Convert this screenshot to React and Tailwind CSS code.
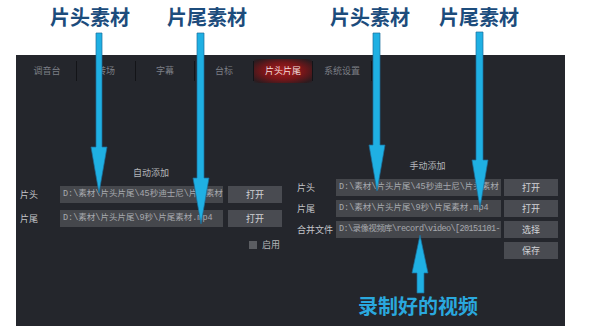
import React from "react";

const cjk = { fontFamily: '"Noto Sans CJK SC", "Noto Sans", sans-serif' };
const mono = { fontFamily: '"Liberation Mono", "Noto Sans CJK SC", monospace' };

const tabs = ["调音台", "转场", "字幕", "台标", "片头片尾", "系统设置"];

function Tab({ label, active }) {
  return (
    <div className="flex items-center">
      <div
        className={
          "w-[58px] h-[24px] flex items-center justify-center text-[9px] " +
          (active
            ? "text-[#f2dede] bg-[radial-gradient(ellipse_at_center,#a81d1d_0%,#761619_50%,#2c1b1f_88%,transparent_100%)]"
            : "text-[#7c7f86]")
        }
      >
        {label}
      </div>
      <div className="w-px h-[20px] bg-[#131418]" />
    </div>
  );
}

function Field({ text, w, extra = "" }) {
  return (
    <div
      className={"h-full shrink-0 bg-[#45474c] text-[#a7a9ae] text-[8.5px] pl-[3px] flex items-center overflow-hidden whitespace-nowrap " + w + " " + extra}
      style={mono}
    >
      <span className="block overflow-hidden">{text}</span>
    </div>
  );
}

function Btn({ label, className = "" }) {
  return (
    <div className={"w-[54px] shrink-0 h-full bg-[#494b51] text-[#d2d3d6] text-[9px] flex items-center justify-center " + className}>
      {label}
    </div>
  );
}

export default function App() {
  return (
    <div className="relative w-[589px] h-[331px] bg-white overflow-hidden" style={cjk}>
      {/* panel */}
      <div className="ml-[16px] pt-[55px]">
        <div className="w-[549px] h-[271px] bg-[#24262c] flex flex-col">
          <div className="h-[31px] flex items-center pl-[2px] pt-[1px]">
            {tabs.map((t) => (
              <Tab key={t} label={t} active={t === "片头片尾"} />
            ))}
          </div>
          <div className="flex items-start">
            {/* left group */}
            <div className="ml-[4px] w-[262px] mt-[81px] flex flex-col">
              <div className="h-[12px] leading-[12px] text-[9px] text-[#b4b6ba] text-center">自动添加</div>
              <div className="mt-[7px] h-[17px] flex items-center">
                <div className="w-[40px] text-[9px] text-[#c3c5c9]">片头</div>
                <Field w="w-[163px]" text="D:\素材\片头片尾\45秒迪士尼\片头素材" />
                <Btn label="打开" className="ml-[5px]" />
              </div>
              <div className="mt-[7px] h-[17px] flex items-center">
                <div className="w-[40px] text-[9px] text-[#c3c5c9]">片尾</div>
                <Field w="w-[163px]" text="D:\素材\片头片尾\9秒\片尾素材.mp4" />
                <Btn label="打开" className="ml-[5px]" />
              </div>
              <div className="mt-[12px] h-[12px] flex items-center justify-end pr-[2px]">
                <div className="w-[8px] h-[8px] bg-[#5b5d62] mr-[5px]" />
                <div className="text-[9px] text-[#b4b6ba]">启用</div>
              </div>
            </div>
            {/* right group */}
            <div className="ml-[15px] w-[261px] mt-[74px] flex flex-col">
              <div className="h-[12px] leading-[12px] text-[9px] text-[#b4b6ba] text-center">手动添加</div>
              <div className="mt-[7px] flex flex-col gap-[4px]">
                <div className="h-[17px] flex items-center">
                  <div className="w-[39px] shrink-0 text-[9px] text-[#c3c5c9]">片头</div>
                  <Field w="w-[165px]" text="D:\素材\片头片尾\45秒迪士尼\片头素材" />
                  <Btn label="打开" className="ml-[3px]" />
                </div>
                <div className="h-[17px] flex items-center">
                  <div className="w-[39px] shrink-0 text-[9px] text-[#c3c5c9]">片尾</div>
                  <Field w="w-[165px]" text="D:\素材\片头片尾\9秒\片尾素材.mp4" />
                  <Btn label="打开" className="ml-[3px]" />
                </div>
                <div className="h-[17px] flex items-center">
                  <div className="w-[39px] shrink-0 text-[9px] text-[#c3c5c9] whitespace-nowrap">合并文件</div>
                  <Field w="w-[165px]" extra="tracking-[-0.6px]" text="D:\录像视频库\record\video\[20151101-" />
                  <Btn label="选择" className="ml-[3px]" />
                </div>
                <div className="h-[17px] flex items-center justify-end">
                  <Btn label="保存" />
                </div>
              </div>
            </div>
          </div>
        </div>
      </div>

      {/* annotation arrows */}
      <svg className="absolute left-0 top-0 pointer-events-none" width="589" height="331" viewBox="0 0 589 331">
        <g fill="#1fb0e3" stroke="#1b6f9c" strokeWidth="0.7">
          <path d="M96,33 H102 V147 H107 L99,193 L91,147 H96 Z" />
          <path d="M197,33 H204 V178 H209 L201,224 L193,178 H197 Z" />
          <path d="M373,33 H380 V145 H385 L377,191 L369,145 H373 Z" />
          <path d="M476,32 H483 V160 H488 L480,208 L472,160 H476 Z" />
          <path d="M420,235 L428,273 H424 V293 H417 V273 H412 Z" />
        </g>
      </svg>

      {/* annotation labels */}
      <div className="absolute left-[50px] top-[5px] text-[20px] leading-[24px] font-bold text-[#1c4c7c] whitespace-nowrap">片头素材</div>
      <div className="absolute left-[167px] top-[5px] text-[20px] leading-[24px] font-bold text-[#1c4c7c] whitespace-nowrap">片尾素材</div>
      <div className="absolute left-[330px] top-[5px] text-[20px] leading-[24px] font-bold text-[#1c4c7c] whitespace-nowrap">片头素材</div>
      <div className="absolute left-[439px] top-[5px] text-[20px] leading-[24px] font-bold text-[#1c4c7c] whitespace-nowrap">片尾素材</div>
      <div className="absolute left-[358px] top-[294px] text-[20px] leading-[24px] font-bold text-[#2aa8de] whitespace-nowrap">录制好的视频</div>
    </div>
  );
}
